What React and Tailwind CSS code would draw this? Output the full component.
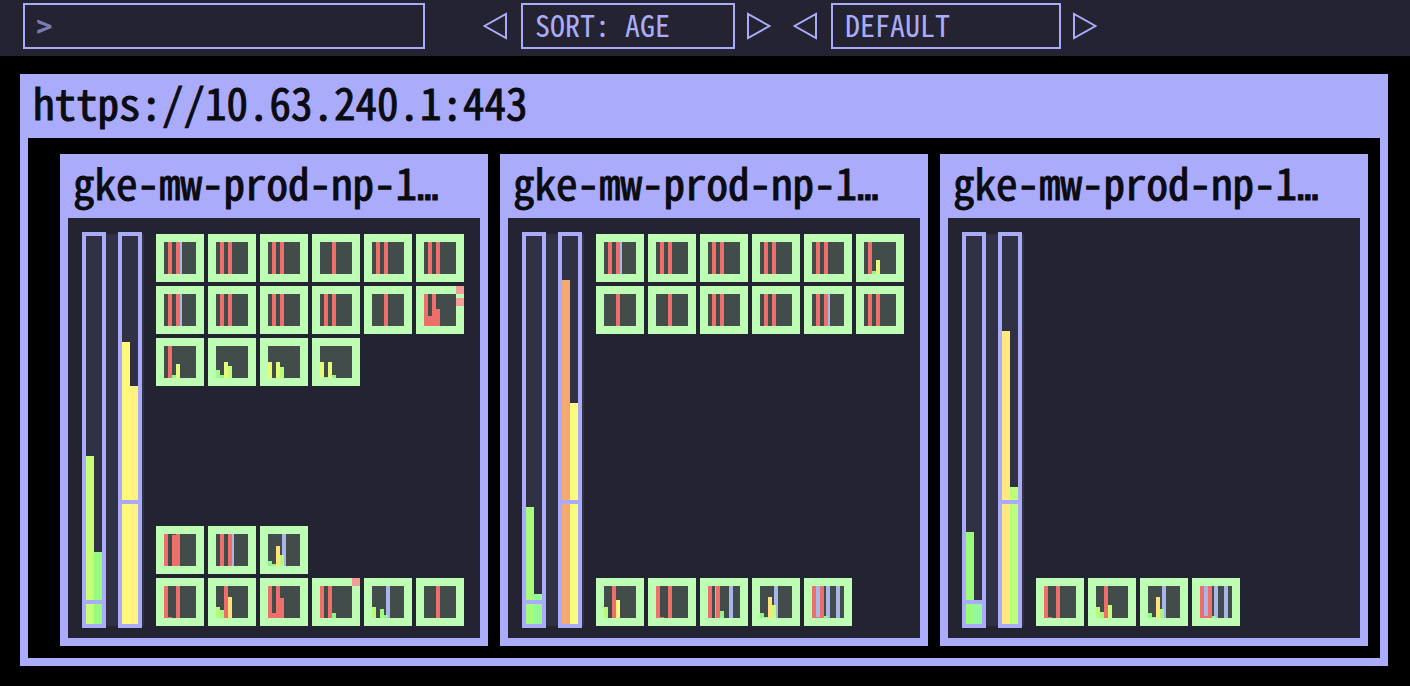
import React from "react";

const RED = "#ee6e6a";
const BLUE = "#a9b6ea";
const MINT = "#8ff68c";
const GREEN = "#a1fb7c";
const LIME = "#b8fb78";
const PEAR = "#c8fd78";
const LEMON = "#e4fb79";
const YELLOW = "#fbfa7c";
const GOLD = "#ffe27a";

// Each bar is [x, height, colour]; each line is [x, width].
const red = (...xs) => xs.map((x) => [x, 32, RED]);
const pair = { bars: red(4, 12) };
const pairLimit = { bars: red(4, 12), lines: [[16, 2]] };
const single = { bars: red(12) };
const spread = { bars: [...red(0, 12), [4, 1, RED]] };
const small = { bars: [...red(4), [8, 3, MINT], [12, 14, LEMON]] };

const nodes = [
  {
    name: "gke-mw-prod-np-1",
    cpu: { bars: [[168, "#c8fd78"], [72, "#96fc7d"]], mark: 20 },
    memory: { bars: [[282, "#fff97b"], [238, "#fff380"]], mark: 120 },
    pods: [
      pairLimit, pair, pair, single, pair, pair,
      pairLimit, pair, pair, pair, single,
      { bars: [...red(0, 8), [4, 10, RED], [12, 17, RED]], alerts: [0, 12] },
      small,
      { bars: [[0, 8, GREEN], [4, 3, MINT], [8, 16, LEMON], [12, 12, PEAR]] },
      { bars: [[0, 16, LEMON], [8, 16, LEMON], [12, 11, LIME]] },
      { bars: [[0, 16, LEMON], [4, 1, MINT], [8, 16, LEMON], [12, 3, MINT]] },
    ],
    system: [
      { bars: [...red(0, 12), [8, 31, RED]] },
      pairLimit,
      { bars: [[0, 5, MINT], [4, 2, MINT], [8, 20, GOLD], [12, 11, LIME]], lines: [[14, 4]] },
      null, null, null,
      spread,
      { bars: [[0, 11, LIME], [4, 8, GREEN], ...red(8), [12, 21, GOLD]] },
      { bars: [...red(0, 8), [4, 5, RED], [12, 20, RED]] },
      { bars: [...red(0, 8), [12, 5, MINT]], alerts: [0] },
      { bars: [[0, 11, LIME], [8, 9, GREEN], [12, 3, MINT]], lines: [[14, 4]] },
      single,
    ],
  },
  {
    name: "gke-mw-prod-np-1",
    cpu: { bars: [[117, "#a6fc7b"], [30, "#94fa93"]], mark: 20 },
    memory: { bars: [[344, "#f4a970"], [221, "#fbfc80"]], mark: 120 },
    pods: [
      pairLimit, pair, pair, pair, pair, small,
      single, single, pair, pair, pairLimit, pair,
    ],
    system: [
      { bars: [[0, 11, LIME], ...red(8), [12, 18, YELLOW]] },
      spread,
      { bars: [...red(0, 8), [12, 7, MINT]], lines: [[7, 1], [21, 4]] },
      { bars: [[0, 5, MINT], [4, 1, MINT], [8, 21, GOLD], [12, 13, PEAR]], lines: [[14, 4]] },
      { bars: [...red(0, 8), [4, 1, RED], [12, 2, MINT]], lines: [[4, 4], [14, 4], [24, 4]] },
    ],
  },
  {
    name: "gke-mw-prod-np-1",
    cpu: { bars: [[92, "#9bfc7c"], [24, "#93f99a"]], mark: 20 },
    memory: { bars: [[293, "#ffe980"], [137, "#bcfd79"]], mark: 120 },
    pods: [],
    system: [
      spread,
      { bars: [[0, 11, LIME], [4, 6, GREEN], ...red(8), [12, 13, PEAR]] },
      { bars: [[0, 5, MINT], [4, 1, MINT], [8, 21, GOLD], [12, 9, GREEN]], lines: [[14, 4]] },
      { bars: [...red(0, 8), [4, 2, RED], [12, 2, MINT]], lines: [[4, 4], [14, 4], [24, 4]] },
    ],
  },
];

function Pod({ bars, lines = [], alerts = [] }) {
  return (
    <svg width="48" height="48" viewBox="0 0 48 48" shapeRendering="crispEdges" className="block">
      <rect width="48" height="48" fill="#befdb4" />
      <rect x="8" y="8" width="32" height="32" fill="#424d4b" />
      {lines.map(([x, w]) => (
        <rect key={x} x={8 + x} y="8" width={w} height="32" fill={BLUE} />
      ))}
      {bars.map(([x, h, fill]) => (
        <rect key={x} x={8 + x} y={40 - h} width="4" height={h} fill={fill} />
      ))}
      {alerts.map((y) => (
        <rect key={y} x="40" y={y} width="8" height="8" fill="#f39c98" />
      ))}
    </svg>
  );
}

function PodGrid({ pods }) {
  return (
    <div className="grid grid-cols-[repeat(6,48px)] gap-1">
      {pods.map((pod, i) => (pod ? <Pod key={i} {...pod} /> : <span key={i} />))}
    </div>
  );
}

function Meter({ bars, mark }) {
  return (
    <svg width="24" height="396" viewBox="0 0 24 396" shapeRendering="crispEdges" className="block">
      <rect x="2" y="2" width="20" height="392" fill="#303144" />
      {bars.map(([h, fill], i) => (
        <rect key={i} x={4 + i * 8} y={392 - h} width="8" height={h} fill={fill} />
      ))}
      <rect x="4" y={388 - mark} width="16" height="4" fill="#aaabfa" />
      <rect x="2" y="2" width="20" height="392" fill="none" stroke="#aaabfa" strokeWidth="4" />
    </svg>
  );
}

function Node({ name, cpu, memory, pods, system }) {
  return (
    <section className="min-w-0 flex-1 border-8 border-t-0 border-[#aaabfa] bg-[#242331]">
      <h2 className="h-16 bg-[#aaabfa] pl-[5px] text-[43px] leading-[54px] whitespace-nowrap text-[#0b0b12] [-webkit-text-stroke:1px_#0b0b12]">
        {name}
        <span className="font-['DejaVu_Sans_Mono',monospace] text-4xl leading-none">…</span>
      </h2>
      <div className="flex gap-3 px-3.5 pt-3.5 pb-2.5">
        <div className="flex gap-3 bg-[linear-gradient(#303144,#303144)] bg-[length:100%_392px] bg-center bg-no-repeat pr-0.5">
          <Meter {...cpu} />
          <Meter {...memory} />
        </div>
        <div className="flex flex-col justify-between py-0.5">
          <PodGrid pods={pods} />
          <PodGrid pods={system} />
        </div>
      </div>
    </section>
  );
}

function Arrow({ label, right }) {
  return (
    <button type="button" aria-label={label} className="shrink-0">
      <svg width="24" height="28" viewBox="0 0 24 28" fill="none" stroke="#aaabfa" strokeWidth="2" className="block">
        <path d={right ? "M1 2v24L22.500 14z" : "M23 2v24L1.500 14z"} />
      </svg>
    </button>
  );
}

function Picker({ label, value, width }) {
  return (
    <div className="flex items-center">
      <Arrow label={"Previous " + label} />
      <output className={"mr-3 ml-3.5 h-[46px] border-2 border-[#aaabfa] pl-3 text-[30px] leading-[38px] whitespace-pre " + width}>
        {value}
      </output>
      <Arrow label={"Next " + label} right />
    </div>
  );
}

export default function App() {
  return (
    <div className="min-h-screen bg-black font-['Noto_Sans_Mono_CJK_JP','DejaVu_Sans_Mono',monospace]">
      <header className="flex h-14 items-center bg-[#242331] pr-6 pb-1 pl-[23px] text-[#aaabfa]">
        <input
          type="text"
          aria-label="Search"
          placeholder=">"
          className="h-[46px] w-[402px] border-2 border-[#aaabfa] bg-transparent px-3 pb-0.5 text-[30px] outline-none placeholder:text-[#7c7cb4] placeholder:[-webkit-text-stroke:1px_#7c7cb4]"
        />
        <div className="ml-[58px] flex gap-[22px]">
          <Picker label="sort order" value="SORT: AGE" width="w-[214px]" />
          <Picker label="theme" value="DEFAULT" width="w-[230px]" />
        </div>
      </header>
      <main className="pt-[18px] pr-[22px] pb-5 pl-5">
        <section className="border-8 border-t-0 border-[#aaabfa]">
          <h1 className="h-16 bg-[#aaabfa] pl-[5px] text-[43px] leading-[54px] whitespace-nowrap text-[#0b0b12] [-webkit-text-stroke:1px_#0b0b12]">
            https://10.63.240.1:443
          </h1>
          <div className="flex gap-3 pt-4 pr-3 pb-3 pl-8">
            {nodes.map((node, i) => (
              <Node key={i} {...node} />
            ))}
          </div>
        </section>
      </main>
    </div>
  );
}
